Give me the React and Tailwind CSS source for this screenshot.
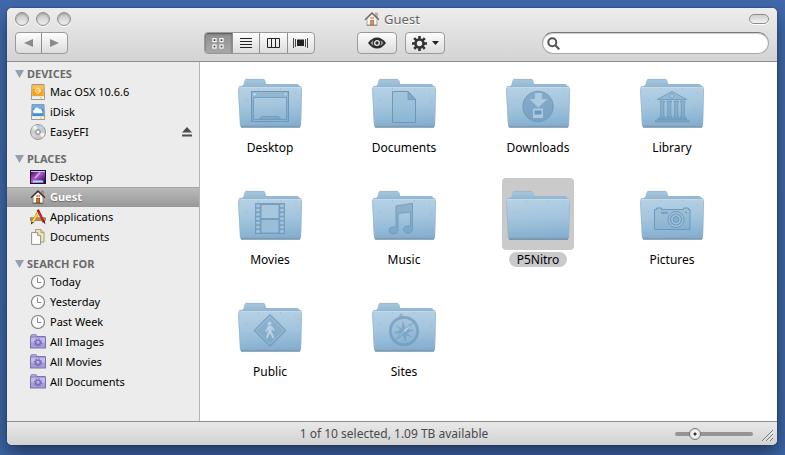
import React from "react";

/* ---------- small icons ---------- */

function HomeIcon({ className = "" }) {
  return (
    <svg viewBox="0 0 16 16" className={`h-4 w-4 shrink-0 ${className}`} aria-hidden="true">
      <rect x="11.5" y="2" width="1.8" height="5" fill="#b09a80" stroke="#6f5c48" strokeWidth="0.4" />
      <path d="M3 7.500L8 2.800l5 4.700V14H3z" fill="#fffdf4" stroke="#7b7568" strokeWidth="0.8" />
      <path d="M1 8.800L8 2l7 6.800" fill="none" stroke="#3d332c" strokeWidth="1.300" />
      <rect x="6.700" y="9.300" width="3" height="4.700" fill="#e0701c" stroke="#7a3410" strokeWidth="0.700" />
      <path d="M6.600 5.800h1v2.200h-1zM8.600 5.800h1v2.200h-1z" fill="#c0301c" />
      <path d="M2.500 14.400h11" stroke="#5c5f4a" strokeWidth="0.8" />
    </svg>
  );
}

function DriveIcon({ kind }) {
  const orange = kind === "disk";
  return (
    <svg viewBox="0 0 16 16" className="h-4 w-4 shrink-0" aria-hidden="true">
      <path d="M1.500 12L2 .500h12l.5 11.500v3.500h-13z" fill="#d9d9d9" stroke="#858585" strokeWidth="0.8" />
      <rect x="2.300" y="1" width="11.400" height="11" fill={orange ? "#f6a21b" : "#3f8fd6"} />
      <rect x="2.300" y="1" width="11.400" height="4" fill={orange ? "#fbbd45" : "#6aaee6"} />
      {orange ? (
        <path d="M8 3.800L4.800 6.700 8 9.500l3.200-2.800zM7 6.700h3.500M8.700 5.200L11 6.700 8.700 8.200" fill="none" stroke="#fff3d0" strokeWidth="1" />
      ) : (
        <path d="M4 9.200a1.800 1.800 0 0 1 .4-3.400 2.400 2.400 0 0 1 4.500-.9 2.200 2.200 0 0 1 3 2.200 1.200 1.200 0 0 1 0 2.100z" fill="#fff" />
      )}
      <path d="M1.900 12.400h12.200v2.700H1.900z" fill="#f1f1f1" />
      <rect x="10" y="13.200" width="1.800" height="1.400" fill="#e8e000" />
    </svg>
  );
}

function DiscIcon() {
  return (
    <svg viewBox="0 0 16 16" className="h-4 w-4 shrink-0" aria-hidden="true">
      <circle cx="8" cy="8" r="7.500" fill="#cbcbcb" stroke="#858585" strokeWidth="0.8" />
      <path d="M8 8L2.500 3.500A7 7 0 0 1 6 1.300z" fill="#f6f6f6" />
      <path d="M8 8L10 1.300a7 7 0 0 1 3.800 2.800z" fill="#b9d3e8" />
      <path d="M8 8l6.800 1.500a7 7 0 0 1-2.700 4z" fill="#f4f4f4" />
      <path d="M8 8L4 13.700A7 7 0 0 1 1.400 10z" fill="#dccfe0" />
      <path d="M8 8L1.200 6.200l1.300-2.600z" fill="#cfe3cb" />
      <circle cx="8" cy="8" r="2.700" fill="#adadad" stroke="#8e8e8e" strokeWidth="0.500" />
      <circle cx="8" cy="8" r="1.300" fill="#fff" />
    </svg>
  );
}

function DesktopIcon() {
  return (
    <svg viewBox="0 0 16 16" className="h-4 w-4 shrink-0" aria-hidden="true">
      <defs>
        <linearGradient id="aurora" x1="0" y1="0" x2="1" y2="1">
          <stop offset="0" stopColor="#2b0b4a" />
          <stop offset="0.45" stopColor="#b058c8" />
          <stop offset="0.7" stopColor="#6a2c96" />
          <stop offset="1" stopColor="#1d0b3c" />
        </linearGradient>
      </defs>
      <rect x="0.500" y="1.500" width="15" height="13" fill="url(#aurora)" stroke="#1d1030" />
      <rect x="1" y="2" width="14" height="1" fill="#d6c4e4" />
      <path d="M5 9L10 3.500" stroke="#f0c4f2" strokeWidth="1.800" opacity="0.7" />
      <path d="M2.500 13.500h11l-1-2h-9z" fill="#dfe6f4" />
      <path d="M4.500 11.800h1.500M7.300 11.800h1.500M10 11.800h1.500" stroke="#5fb2f0" strokeWidth="1.500" />
    </svg>
  );
}

function ApplicationsIcon() {
  return (
    <svg viewBox="0 0 16 16" className="h-4 w-4 shrink-0" aria-hidden="true">
      <rect x="0.500" y="8.800" width="15" height="2.600" fill="#c98a52" stroke="#8a5a30" strokeWidth="0.6" />
      <path d="M8.500 3L2.300 13.500" stroke="#a88316" strokeWidth="2.800" />
      <path d="M8.400 3.200L2.500 13" stroke="#f9e04a" strokeWidth="1.700" />
      <path d="M.8 15.500l.6-3 2 1.200z" fill="#2b2b2b" />
      <path d="M7.800.800L13.600 13" stroke="#a3140f" strokeWidth="2.400" />
      <path d="M8.500 3L13 12.600" stroke="#e04438" strokeWidth="0.900" />
      <path d="M12.500 12.500l2-.8 1 3.800z" fill="#5b1512" />
    </svg>
  );
}

function DocumentsIcon() {
  return (
    <svg viewBox="0 0 16 16" className="h-4 w-4 shrink-0" aria-hidden="true">
      <path d="M5.500.600h5.500L14 3.600V13H5.500z" fill="#efe8b4" stroke="#9c9462" strokeWidth="0.9" />
      <path d="M11 .600v3h3" fill="#d8cf94" stroke="#9c9462" strokeWidth="0.8" />
      <path d="M1.600 3.600h6l3 3V15.400h-9z" fill="#fdfdfd" stroke="#858585" strokeWidth="0.9" />
      <path d="M7.600 3.600v3h3" fill="#e4e4e4" stroke="#858585" strokeWidth="0.8" />
    </svg>
  );
}

function ClockIcon() {
  return (
    <svg viewBox="0 0 16 16" className="h-4 w-4 shrink-0" aria-hidden="true">
      <circle cx="8" cy="8" r="6.500" fill="#fcfcfc" stroke="#7c7c7c" strokeWidth="1.100" />
      <path d="M7.500 3.500V8.500h4" fill="none" stroke="#8a8a8a" strokeWidth="1" />
    </svg>
  );
}

function SmartFolderIcon() {
  return (
    <svg viewBox="0 0 16 16" className="h-4 w-4 shrink-0" aria-hidden="true">
      <path d="M1 4V1.500q0-.8.8-.8h4q.8 0 .8.800v1H15v2H1z" fill="#b9b1e2" stroke="#7468a8" strokeWidth="0.8" />
      <rect x="0.500" y="3" width="15" height="11" fill="#a79dd6" stroke="#7468a8" strokeWidth="0.9" />
      <rect x="1" y="3.500" width="14" height="5" fill="#c9c2ec" opacity="0.8" />
      <circle cx="8" cy="8.500" r="2.400" fill="none" stroke="#7a6cba" strokeWidth="1.400" />
      <circle cx="8" cy="8.500" r="3.600" fill="none" stroke="#7a6cba" strokeWidth="1.200" strokeDasharray="1.410 1.410" />
    </svg>
  );
}

function EjectIcon() {
  return (
    <svg viewBox="0 0 10 10" className="h-2.5 w-2.5" aria-hidden="true">
      <path d="M5 0l5 5.500H0zM0 7.500h10v2H0z" fill="#4d4d4d" />
    </svg>
  );
}

/* ---------- folders ---------- */

function FolderDefs() {
  return (
    <svg className="absolute h-0 w-0" aria-hidden="true">
      <defs>
        <linearGradient id="front" x1="0.2" y1="0" x2="0.3" y2="1">
          <stop offset="0" stopColor="#b6d1e5" />
          <stop offset="0.5" stopColor="#a3c5dd" />
          <stop offset="1" stopColor="#84afcf" />
        </linearGradient>
        <linearGradient id="back" x1="0" y1="0" x2="0" y2="1">
          <stop offset="0" stopColor="#a8c8de" />
          <stop offset="1" stopColor="#8fb5cf" />
        </linearGradient>
      </defs>
    </svg>
  );
}

const INK = "#6d98ba";

const glyphs = {
  Desktop: (
    <g fill="none" stroke={INK}>
      <rect x="17.500" y="25.500" width="37" height="30" />
      <path d="M19.500 31.500h33v22h-33z" strokeWidth="0.8" />
      <path d="M18 26h36v5H18zM18 31h1.500v24H18zM52.500 31H54v24h-1.500z" fill={INK} stroke="none" opacity="0.4" />
      <circle cx="20.500" cy="28.300" r="1.200" fill="#c5ddec" stroke="none" />
      <circle cx="51.500" cy="28.300" r="1" fill="#c5ddec" stroke="none" />
      <path d="M25.500 53l2-2.500h17l2 2.500z" fill={INK} fillOpacity="0.4" strokeWidth="0.8" />
    </g>
  ),
  Documents: (
    <g stroke={INK}>
      <path d="M24.500 25.500H40l7.500 8v23h-23z" fill="#8cb6d5" fillOpacity="0.35" />
      <path d="M40 25.500v8h7.500z" fill={INK} fillOpacity="0.6" strokeWidth="0.8" />
    </g>
  ),
  Downloads: (
    <g>
      <circle cx="36" cy="40.500" r="15.300" fill={INK} fillOpacity="0.65" stroke={INK} strokeWidth="0.8" />
      <path d="M33 27h7v6h5.500L36.300 41.500 27.500 33H33z" fill="#a9cae1" />
      <rect x="31" y="42.500" width="10" height="9.500" rx="1" fill="#a9cae1" />
      <rect x="32.500" y="44.500" width="7" height="4" fill={INK} />
    </g>
  ),
  Library: (
    <g stroke={INK} strokeWidth="0.8">
      <path d="M36 25.500L51 33.500H21z" fill={INK} fillOpacity="0.35" />
      <circle cx="36" cy="30" r="1.900" fill="#b2cfe4" />
      <g fill={INK} fillOpacity="0.45">
        <path d="M24 35h4.500v1L27.800 37v13h.7v1.500H24V50h.700V37L24 36z" />
        <path d="M31 35h4.500v1L34.800 37v13h.7v1.500H31V50h.700V37L31 36z" />
        <path d="M38 35h4.500v1L41.800 37v13h.7v1.500H38V50h.700V37L38 36z" />
        <path d="M44.500 35H49v1l-.7 1v13h.7v1.500h-4.500V50h.700V37l-.7-1z" />
        <path d="M22 52h28.500v1.500H22zM19.500 54h33.500v2H19.500z" />
      </g>
    </g>
  ),
  Movies: (
    <g>
      <rect x="21" y="25" width="30" height="31" fill={INK} fillOpacity="0.85" />
      <rect x="27.500" y="27" width="17" height="13" fill="#a6c7de" />
      <rect x="27.500" y="42" width="17" height="12.500" fill="#98bed9" />
      <path d="M24 26.500v29M48 26.500v29" stroke="#a4c5dd" strokeWidth="3.500" strokeDasharray="2.800 1.450" />
    </g>
  ),
  Music: (
    <g fill={INK} fillOpacity="0.5" stroke={INK} strokeWidth="0.8">
      <path d="M28 28L44.500 25.300V51.500a4.500 3.600 0 1 1-2-3V34L30 35.500V52.500a4.500 3.600 0 1 1-2-3z" />
    </g>
  ),
  Pictures: (
    <g fill="none" stroke={INK}>
      <path d="M18.500 31.500h2v-1.500h5v1.500h22v-1.500h5v1.500h1.500v20h-35.500z" fill={INK} fillOpacity="0.2" />
      <path d="M25.500 34h6v1.500h-6z" strokeWidth="0.7" fill={INK} fillOpacity="0.4" />
      <circle cx="40" cy="41.500" r="8" fill="#9dc2dd" />
      <circle cx="40" cy="41.500" r="5.500" strokeWidth="1.200" />
      <circle cx="40" cy="41.500" r="3" fill={INK} fillOpacity="0.5" strokeWidth="0.8" />
      <circle cx="50" cy="34.500" r="0.900" fill={INK} stroke="none" />
    </g>
  ),
  Public: (
    <g>
      <path d="M36 24.500L52 40.500 36 56.500 20 40.500z" fill={INK} fillOpacity="0.5" stroke={INK} />
      <path d="M36 26.800L49.700 40.500 36 54.200 22.300 40.500z" fill="none" stroke="#a6c8e0" strokeWidth="0.6" />
      <circle cx="35.500" cy="33.500" r="1.900" fill="#b6d2e6" />
      <path d="M34 35.800h3.600l3.200 4.400-.9.800-2.300-2.200.2 3.200 2.600 5.600-1.500.8-3.200-5.200-2 5.200-1.700-.5 1.800-6v-3l-1.500 3-1.200-.5z" fill="#b6d2e6" />
    </g>
  ),
  Sites: (
    <g>
      <circle cx="33" cy="25.500" r="1.300" fill="none" stroke={INK} strokeWidth="0.8" />
      <circle cx="36" cy="41" r="13.700" fill={INK} fillOpacity="0.12" stroke={INK} strokeWidth="2.800" strokeOpacity="0.7" />
      <g transform="rotate(-8 36 41)">
        <path d="M36 30.500l2 8 5.800-4.800-4.400 6 7.600 1.800-8 2 4.500 6-5.700-4.300L36 52.500l-2-7.800-5.700 4.300 4.500-6-7.800-1.500 7.600-2.200-4.400-5.600 5.800 4.600z" fill={INK} fillOpacity="0.6" />
      </g>
      <path d="M45 33l-7.800 9.800-2.600-2.600z" fill="#b2cfe4" stroke={INK} strokeWidth="0.500" />
      <path d="M27 50l7.600-9.800 2.600 2.600z" fill="#8fb6d3" stroke={INK} strokeWidth="0.500" />
    </g>
  ),
};

function FolderIcon({ name }) {
  return (
    <svg viewBox="0 0 72 72" className="h-[72px] w-[72px]" aria-hidden="true">
      <path d="M7 61.500h59" stroke="#5c6f80" strokeWidth="1.200" opacity="0.6" />
      <path d="M6 22l3.500-3.500.8-3.700Q10.800 13 12.500 13h16.700q1.800 0 2.300 1.800l.8 3.200H62.500q2.500 0 3 2L66 22z" fill="url(#back)" />
      <path d="M32 18.500h31.500M11.500 13.400h18.500" stroke="#93b6cf" strokeWidth="0.8" />
      <path d="M5.700 20.600h60.600q1.900 0 1.800 2L67 59q0 2-2 2H8q-2 0-2-2L3.900 22.600q-.1-2 1.800-2z" fill="url(#front)" />
      <path d="M5 21.500h62" stroke="#c6dbea" strokeWidth="0.8" />
      <path d="M5 20.500h62" stroke="#8bb0ca" strokeWidth="0.7" />
      <path d="M6.500 60.300h60" stroke="#6a93b3" strokeWidth="1" opacity="0.7" />
      <path d="M4.500 23L6.400 59M67.600 23L66.600 59" stroke="#92b5cf" strokeWidth="0.6" />
      <path d="M12 34h1M16 46h1M24 23h1M61 27h1M58 44h1M63 36h1M46 23h1M14 55h1M60 56h1" stroke="#8db2cd" strokeWidth="0.8" />
      {glyphs[name]}
    </svg>
  );
}

/* ---------- sidebar ---------- */

const sections = [
  {
    title: "DEVICES",
    items: [
      { label: "Mac OSX 10.6.6", icon: <DriveIcon kind="disk" /> },
      { label: "iDisk", icon: <DriveIcon kind="cloud" /> },
      { label: "EasyEFI", icon: <DiscIcon />, eject: true },
    ],
  },
  {
    title: "PLACES",
    items: [
      { label: "Desktop", icon: <DesktopIcon /> },
      { label: "Guest", icon: <HomeIcon />, selected: true },
      { label: "Applications", icon: <ApplicationsIcon /> },
      { label: "Documents", icon: <DocumentsIcon /> },
    ],
  },
  {
    title: "SEARCH FOR",
    items: [
      { label: "Today", icon: <ClockIcon /> },
      { label: "Yesterday", icon: <ClockIcon /> },
      { label: "Past Week", icon: <ClockIcon /> },
      { label: "All Images", icon: <SmartFolderIcon /> },
      { label: "All Movies", icon: <SmartFolderIcon /> },
      { label: "All Documents", icon: <SmartFolderIcon /> },
    ],
  },
];

function SidebarItem({ item }) {
  return (
    <li
      className={
        item.selected
          ? "flex h-5 items-center bg-linear-to-b from-[#bcbcbc] to-[#989898] pr-[7px] pl-[23px] shadow-[inset_0_1px_0_#a3a3a3]"
          : "flex h-5 items-center pr-[7px] pl-[23px]"
      }
    >
      <a
        href="#"
        className={
          item.selected
            ? "flex flex-1 items-center gap-1 font-bold text-white [text-shadow:0_1px_1px_#666]"
            : "flex flex-1 items-center gap-1 text-black"
        }
      >
        {item.icon}
        {item.label}
      </a>
      {item.eject && (
        <button type="button" aria-label={`Eject ${item.label}`}>
          <EjectIcon />
        </button>
      )}
    </li>
  );
}

function Sidebar() {
  return (
    <nav className="flex w-[193px] shrink-0 flex-col gap-[9px] border-r border-[#b4b4b4] bg-[#ececec] pt-1 text-[11px] leading-4">
      {sections.map((section) => (
        <section key={section.title}>
          <h2 className="flex h-4 items-center gap-[3px] pl-2 font-bold text-[#6b6b6b]">
            <svg viewBox="0 0 9 8" className="h-2 w-[9px]" aria-hidden="true">
              <path d="M0 0h9L4.500 8z" fill="#94a0ae" />
            </svg>
            {section.title}
          </h2>
          <ul>
            {section.items.map((item) => (
              <SidebarItem key={item.label} item={item} />
            ))}
          </ul>
        </section>
      ))}
    </nav>
  );
}

/* ---------- toolbar ---------- */

const buttonFace =
  "flex h-[22px] items-center justify-center rounded-sm border border-[#9a9a9a] bg-linear-to-b from-[#fdfdfd] to-[#dcdcdc]";

function ViewButton({ label, active, last, children }) {
  return (
    <button
      type="button"
      aria-label={label}
      aria-pressed={!!active}
      className={`flex flex-1 items-center justify-center ${last ? "" : "border-r border-[#8f8f8f]"} ${
        active ? "bg-linear-to-b from-[#8f8f8f] to-[#a8a8a8] shadow-[inset_0_1px_2px_#555]" : ""
      }`}
    >
      {children}
    </button>
  );
}

function TitleBar() {
  return (
    <div className="grid h-[22px] grid-cols-[1fr_auto_1fr] items-center px-2">
      <div className="flex gap-[7px]">
        {["Close", "Minimize", "Zoom"].map((label) => (
          <button
            key={label}
            type="button"
            aria-label={label}
            className="h-3.5 w-3.5 rounded-full border border-[#8e8e8e] bg-linear-to-b from-[#c4c4c4] to-[#f0f0f0] shadow-[inset_0_1px_2px_#999,0_1px_0_#fff]"
          />
        ))}
      </div>
      <h1 className="flex items-center gap-1 text-[13px] leading-4 text-[#666] [text-shadow:0_1px_0_#fff]">
        <HomeIcon className="opacity-70" />
        Guest
      </h1>
      <button
        type="button"
        aria-label="Toggle toolbar"
        className="h-2.5 w-5 justify-self-end rounded-full border border-[#8c8c8c] bg-linear-to-b from-[#cfcfcf] to-[#f2f2f2] shadow-[0_1px_0_#fff]"
      />
    </div>
  );
}

function Toolbar() {
  return (
    <div className="flex items-center px-2 pt-0.5 pb-[7px]">
      <div className={`${buttonFace} w-[53px] items-stretch`}>
        <button type="button" aria-label="Back" className="flex flex-1 items-center justify-center border-r border-[#8f8f8f]">
          <svg viewBox="0 0 9 8" className="h-2 w-[9px]" aria-hidden="true">
            <path d="M9 0v8L0 4z" fill="#8a8a8a" />
          </svg>
        </button>
        <button type="button" aria-label="Forward" className="flex flex-1 items-center justify-center">
          <svg viewBox="0 0 9 8" className="h-2 w-[9px]" aria-hidden="true">
            <path d="M0 0v8l9-4z" fill="#8a8a8a" />
          </svg>
        </button>
      </div>

      <div className={`${buttonFace} ml-[136px] w-[111px] items-stretch overflow-hidden`}>
        <ViewButton label="Icon view" active>
          <svg viewBox="0 0 12 11" className="h-[11px] w-3" aria-hidden="true">
            <g fill="#444" stroke="#fff" strokeWidth="1.200">
              <rect x="1" y="0.600" width="3" height="3" />
              <rect x="8" y="0.600" width="3" height="3" />
              <rect x="1" y="7" width="3" height="3" />
              <rect x="8" y="7" width="3" height="3" />
            </g>
          </svg>
        </ViewButton>
        <ViewButton label="List view">
          <svg viewBox="0 0 12 10" className="h-2.5 w-3" aria-hidden="true">
            <path d="M0 .500h12M0 3.500h12M0 6.500h12M0 9.500h12" stroke="#222" />
          </svg>
        </ViewButton>
        <ViewButton label="Column view">
          <svg viewBox="0 0 13 10" className="h-2.5 w-[13px] shrink-0" aria-hidden="true">
            <path d="M.5 .500h12v9H.5zM4.500 0v10M8.500 0v10" fill="none" stroke="#222" />
          </svg>
        </ViewButton>
        <ViewButton label="Cover flow view" last>
          <svg viewBox="0 0 15 10" className="h-2.5 w-[15px] shrink-0" aria-hidden="true">
            <path d="M.5 0v10M2.500 1v8M12.500 1v8M14.500 0v10" stroke="#333" strokeWidth="0.900" />
            <rect x="4" y="1.500" width="7" height="6.500" fill="#222" />
          </svg>
        </ViewButton>
      </div>

      <button type="button" aria-label="Quick Look" className={`${buttonFace} ml-[42px] w-10`}>
        <svg viewBox="0 0 18 12" className="h-3 w-[18px]" aria-hidden="true">
          <path d="M0 6Q4 .500 9 .500T18 6Q14 11.500 9 11.500T0 6z" fill="#2c2c2c" />
          <path d="M2.500 6Q4 4 5.500 3.200 4.500 6 5.500 8.800 4 8 2.500 6zM15.500 6Q14 4 12.500 3.200q1 2.800 0 5.600Q14 8 15.500 6z" fill="#ddd" opacity="0.6" />
          <circle cx="9" cy="6" r="2.300" fill="none" stroke="#eee" strokeWidth="1.300" />
        </svg>
      </button>

      <button type="button" aria-label="Action menu" className={`${buttonFace} ml-2 w-10 gap-[5px]`}>
        <svg viewBox="0 0 15 15" className="h-[15px] w-[15px] shrink-0" aria-hidden="true">
          <circle cx="7.500" cy="7.500" r="4" fill="none" stroke="#333" strokeWidth="2.600" />
          <path
            d="M7.500 0v3M7.500 12v3M0 7.500h3M12 7.500h3M2.200 2.200l2.200 2.200M10.600 10.600l2.200 2.200M2.200 12.800l2.200-2.200M10.600 4.400l2.200-2.200"
            stroke="#333"
            strokeWidth="2.600"
          />
        </svg>
        <svg viewBox="0 0 7 4" className="h-1 w-[7px] shrink-0" aria-hidden="true">
          <path d="M0 0h7L3.500 4z" fill="#222" />
        </svg>
      </button>

      <label className="ml-auto flex h-[22px] w-[227px] items-center gap-1 rounded-full border border-[#a8a8a8] border-t-[#777] bg-white pr-2 pl-1 shadow-[inset_0_1px_1px_#ccc]">
        <svg viewBox="0 0 13 13" className="h-[13px] w-[13px] shrink-0" aria-hidden="true">
          <circle cx="5.300" cy="5.300" r="4" fill="none" stroke="#555" strokeWidth="2" />
          <path d="M8.300 8.300l4 4" stroke="#555" strokeWidth="2.200" />
        </svg>
        <input type="text" aria-label="Search" className="w-full min-w-0 bg-transparent text-[11px] outline-none" />
      </label>
    </div>
  );
}

/* ---------- content ---------- */

const folders = [
  "Desktop",
  "Documents",
  "Downloads",
  "Library",
  "Movies",
  "Music",
  "P5Nitro",
  "Pictures",
  "Public",
  "Sites",
];

function FolderTile({ name, selected }) {
  return (
    <li className="flex flex-col items-center gap-0.5">
      <div className={selected ? "rounded-sm bg-[#cacaca]" : ""}>
        <FolderIcon name={name} />
      </div>
      <span
        className={`rounded-full px-2 text-[12px] leading-[15px] text-black ${selected ? "bg-[#cacaca]" : ""}`}
      >
        {name}
      </span>
    </li>
  );
}

function StatusBar() {
  return (
    <footer className="grid h-[24px] grid-cols-[1fr_auto_1fr] items-center border-t border-[#8f8f8f] bg-linear-to-b from-[#e9e9e9] to-[#d2d2d2] pr-1 pl-2">
      <span />
      <p className="text-[12px] leading-4 text-[#4a4a4a]">1 of 10 selected, 1.09 TB available</p>
      <div className="flex items-center justify-end gap-[9px]">
        <input
          type="range"
          aria-label="Icon size"
          min="0"
          max="100"
          defaultValue="21"
          className="h-3 w-[78px] appearance-none bg-transparent [&::-webkit-slider-runnable-track]:h-1 [&::-webkit-slider-runnable-track]:rounded-full [&::-webkit-slider-runnable-track]:bg-[#949494] [&::-webkit-slider-thumb]:-mt-1 [&::-webkit-slider-thumb]:h-3 [&::-webkit-slider-thumb]:w-3 [&::-webkit-slider-thumb]:appearance-none [&::-webkit-slider-thumb]:rounded-full [&::-webkit-slider-thumb]:border [&::-webkit-slider-thumb]:border-[#777] [&::-webkit-slider-thumb]:bg-[radial-gradient(circle,#333_0_1px,#f6f6f6_2px,#dedede_6px)]"
        />
        <svg viewBox="0 0 11 11" className="mt-1 h-[11px] w-[11px]" aria-hidden="true">
          <path d="M0 11L11 0M4 11l7-7M8 11l3-3" stroke="#777" />
          <path d="M1 11.500L11.500 1M5 11.500L11.500 5" stroke="#fff" strokeWidth="0.6" />
        </svg>
      </div>
    </footer>
  );
}

export default function App() {
  return (
    <main className="flex min-h-screen bg-linear-to-b from-[#4069ab] to-[#3c64a6] pt-2 pr-2 pb-2.5 pl-[7px] font-['Noto_Sans','Lucida_Grande',sans-serif]">
      <FolderDefs />
      <div className="flex flex-1 flex-col overflow-hidden rounded-[5px] bg-white shadow-[0_8px_18px_rgba(0,0,0,0.45),0_0_2px_rgba(0,0,0,0.4)]">
        <header className="border-b border-[#8f8f8f] bg-linear-to-b from-[#ededed] to-[#d3d3d3]">
          <TitleBar />
          <Toolbar />
        </header>
        <div className="flex flex-1">
          <Sidebar />
          <ul className="grid flex-1 grid-cols-[repeat(auto-fill,134px)] content-start gap-y-[23px] pt-1 pl-[3px]">
            {folders.map((name) => (
              <FolderTile key={name} name={name} selected={name === "P5Nitro"} />
            ))}
          </ul>
        </div>
        <StatusBar />
      </div>
    </main>
  );
}
